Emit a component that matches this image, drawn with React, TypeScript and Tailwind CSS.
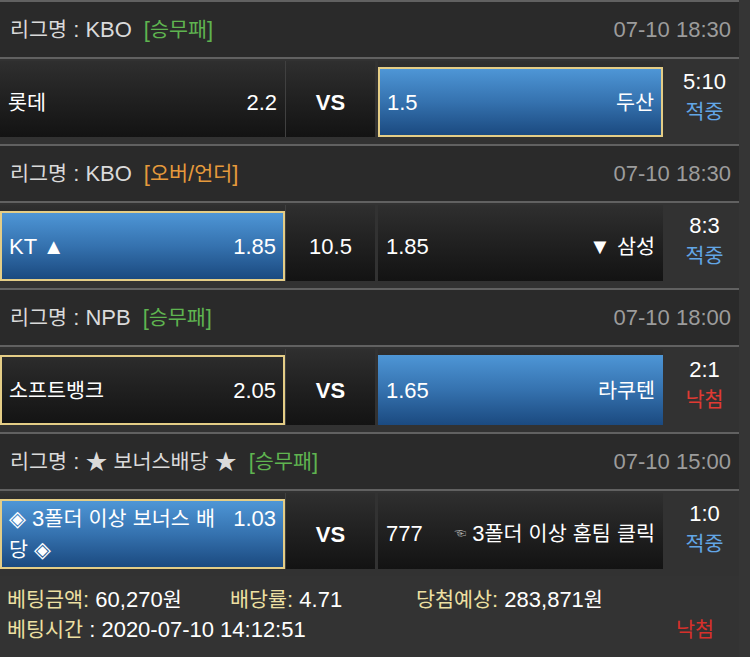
import React from "react";

type CellStyle = "dark" | "selected" | "darkSelected" | "blue";

interface Side {
    name: string[];
    odds: string;
    style: CellStyle;
}

interface Bet {
    league: string;
    kind: string;
    kindColor: string;
    time: string;
    home: Side;
    mid: string;
    midBold: boolean;
    away: Side;
    score: string;
    result: string;
    win: boolean;
}

const bets: Bet[] = [
    {
        league: "KBO",
        kind: "[승무패]",
        kindColor: "text-[#5fb450]",
        time: "07-10 18:30",
        home: { name: ["롯데"], odds: "2.2", style: "dark" },
        mid: "VS",
        midBold: true,
        away: { name: ["두산"], odds: "1.5", style: "selected" },
        score: "5:10",
        result: "적중",
        win: true,
    },
    {
        league: "KBO",
        kind: "[오버/언더]",
        kindColor: "text-[#e59a3c]",
        time: "07-10 18:30",
        home: { name: ["KT ▲"], odds: "1.85", style: "selected" },
        mid: "10.5",
        midBold: false,
        away: { name: ["▼ 삼성"], odds: "1.85", style: "dark" },
        score: "8:3",
        result: "적중",
        win: true,
    },
    {
        league: "NPB",
        kind: "[승무패]",
        kindColor: "text-[#5fb450]",
        time: "07-10 18:00",
        home: { name: ["소프트뱅크"], odds: "2.05", style: "darkSelected" },
        mid: "VS",
        midBold: true,
        away: { name: ["라쿠텐"], odds: "1.65", style: "blue" },
        score: "2:1",
        result: "낙첨",
        win: false,
    },
    {
        league: "★ 보너스배당 ★",
        kind: "[승무패]",
        kindColor: "text-[#5fb450]",
        time: "07-10 15:00",
        // the original wraps inside the word, keep that break
        home: { name: ["◈ 3폴더 이상 보너스 배", "당 ◈"], odds: "1.03", style: "selected" },
        mid: "VS",
        midBold: true,
        away: { name: ["3폴더 이상 홈팀 클릭"], odds: "777", style: "dark" },
        score: "1:0",
        result: "적중",
        win: true,
    },
];

// Hangul glyphs in the CJK font run wider than the original, so shrink them a little
function Ko({ text }: { text: string }) {
    const parts = text.split(/([\uAC00-\uD7A3]+)/);
    return (
        <>
            {parts.map((p, i) =>
                /[\uAC00-\uD7A3]/.test(p) ? (
                    <span key={i} className="text-[0.94em]">
                        {p}
                    </span>
                ) : (
                    <React.Fragment key={i}>{p}</React.Fragment>
                )
            )}
        </>
    );
}

const boxStyles: Record<CellStyle, string> = {
    dark: "px-2",
    selected:
        "border-2 border-[#e4cd86] px-[7px] bg-linear-to-b from-[#4e96d6] via-[#3572af] to-[#1b4a80]",
    darkSelected: "border-2 border-[#e4cd86] px-[7px]",
    blue: "px-2 bg-linear-to-b from-[#4e96d6] via-[#3572af] to-[#1b4a80]",
};

function TeamCell({ side, home, hand }: { side: Side; home: boolean; hand?: boolean }) {
    const name = side.name.map((line, i) => (
        <React.Fragment key={i}>
            {i > 0 && <br />}
            <Ko text={line} />
        </React.Fragment>
    ));
    return (
        <div className="w-[285px] h-[76px] flex items-end bg-linear-to-b from-[#2f2f2f] to-[#131313]">
            <div className={`h-[70px] w-full flex items-center text-white ${boxStyles[side.style]}`}>
                <div className="w-full leading-[31px]">
                    {home ? (
                        <>
                            <span className="float-right ml-3">{side.odds}</span>
                            {name}
                        </>
                    ) : (
                        <>
                            <span className="float-right">
                                {hand && (
                                    <span className="text-[12px] text-[#b5b5b5] mr-[6px] align-middle">☜</span>
                                )}
                                {name}
                            </span>
                            {side.odds}
                        </>
                    )}
                </div>
            </div>
        </div>
    );
}

function BetBlock({ bet, last }: { bet: Bet; last: boolean }) {
    return (
        <div className="border-t-2 border-[#616161]">
            <div className="h-[57px] bg-[#2a2a2a] flex items-center justify-between pl-[10px] pr-2 border-b-2 border-[#616161]">
                <div className="text-[#dadada]">
                    <Ko text={`리그명 : ${bet.league}`} />
                    <span className={`ml-3 ${bet.kindColor}`}>
                        <Ko text={bet.kind} />
                    </span>
                </div>
                <div className="text-[#9c9c9c]">{bet.time}</div>
            </div>
            <div className="h-[85px] pb-[7px] flex items-end bg-[#323232]">
                <TeamCell side={bet.home} home />
                <div className="w-px h-[76px] bg-[#404040]" />
                <div
                    className={`w-[89px] h-[76px] flex items-center justify-center pt-[6px] text-white bg-linear-to-b from-[#2f2f2f] to-[#131313] ${
                        bet.midBold ? "font-bold" : ""
                    }`}
                >
                    {bet.mid}
                </div>
                <div className="w-[3px]" />
                <TeamCell side={bet.away} home={false} hand={last} />
                <div className="w-[75px] h-[76px] pl-2 pb-1 flex flex-col items-center justify-center leading-[30px]">
                    <span className="text-white">{bet.score}</span>
                    <span className={bet.win ? "text-[#62a6e6]" : "text-[#e03a33]"}>
                        <Ko text={bet.result} />
                    </span>
                </div>
            </div>
        </div>
    );
}

export default function App() {
    return (
        <div className="w-[750px] h-[657px] bg-[#353535] overflow-hidden font-['Liberation_Sans','Noto_Sans_CJK_KR',sans-serif] text-[22px]">
            <div className="w-[739px]">
                {bets.map((b, i) => (
                    <BetBlock key={i} bet={b} last={i === bets.length - 1} />
                ))}
                <div className="h-[81px] bg-[#333333] px-[7px] pt-[9px] leading-[30px]">
                    <div className="flex">
                        <div className="w-[223px]">
                            <span className="text-[#ede0a2]">
                                <Ko text="베팅금액:" />
                            </span>
                            <span className="text-white">
                                {" "}
                                <Ko text="60,270원" />
                            </span>
                        </div>
                        <div className="w-[186px]">
                            <span className="text-[#ede0a2]">
                                <Ko text="배당률:" />
                            </span>
                            <span className="text-white"> 4.71</span>
                        </div>
                        <div>
                            <span className="text-[#ede0a2]">
                                <Ko text="당첨예상:" />
                            </span>
                            <span className="text-white">
                                {" "}
                                <Ko text="283,871원" />
                            </span>
                        </div>
                    </div>
                    <div className="flex">
                        <div className="w-[669px]">
                            <span className="text-[#ede0a2]">
                                <Ko text="베팅시간" />
                            </span>
                            <span className="text-white"> : 2020-07-10 14:12:51</span>
                        </div>
                        <div className="text-[#d7302b]">
                            <Ko text="낙첨" />
                        </div>
                    </div>
                </div>
            </div>
        </div>
    );
}
